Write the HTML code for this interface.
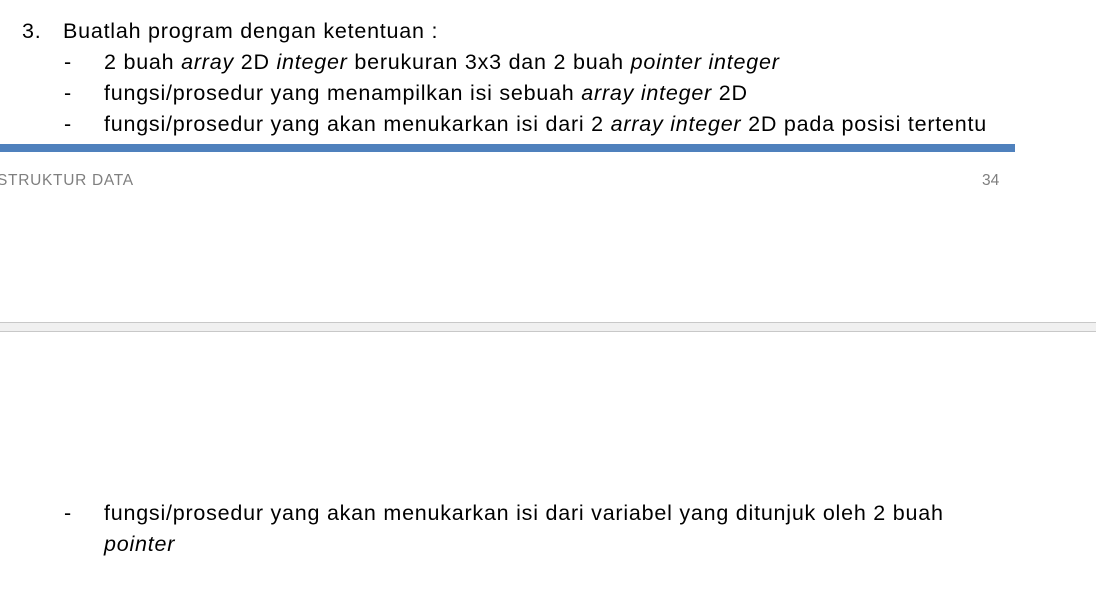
<!DOCTYPE html>
<html><head><style>
body{margin:0;width:1096px;height:593px;background:#fff;position:relative;overflow:hidden;font-family:"Liberation Sans",sans-serif;color:#000}
.t{position:absolute;font-size:21.5px;white-space:nowrap;line-height:24px;letter-spacing:0.77px}
i{font-style:italic}
.g{position:absolute;color:#7f7f7f;font-size:15.5px}
</style></head><body>
<div class="t" style="left:22px;top:19px">3.</div>
<div class="t" style="left:63px;top:19px">Buatlah program dengan ketentuan :</div>
<div class="t" style="left:64px;top:50px">-</div>
<div class="t" style="left:104px;top:50px">2 buah <i>array</i> 2D <i>integer</i> berukuran 3x3 dan 2 buah <i>pointer integer</i></div>
<div class="t" style="left:64px;top:81px">-</div>
<div class="t" style="left:104px;top:81px">fungsi/prosedur yang menampilkan isi sebuah <i>array integer</i> 2D</div>
<div class="t" style="left:64px;top:112px">-</div>
<div class="t" style="left:104px;top:112px">fungsi/prosedur yang akan menukarkan isi dari 2 <i>array integer</i> 2D pada posisi tertentu</div>
<div style="position:absolute;left:0;top:144px;width:1015px;height:8px;background:#4f81bd"></div>
<div class="g" style="left:-3px;top:172px;letter-spacing:0.7px">STRUKTUR DATA</div>
<div class="g" style="left:982px;top:172px">34</div>
<div style="position:absolute;left:0;top:322px;width:1096px;height:8px;background:#f0f0f0;border-top:1px solid #c8c8c8;border-bottom:1px solid #c8c8c8"></div>
<div class="t" style="left:64px;top:501px">-</div>
<div class="t" style="left:104px;top:501px">fungsi/prosedur yang akan menukarkan isi dari variabel yang ditunjuk oleh 2 buah</div>
<div class="t" style="left:104px;top:532px"><i>pointer</i></div>
</body></html>
